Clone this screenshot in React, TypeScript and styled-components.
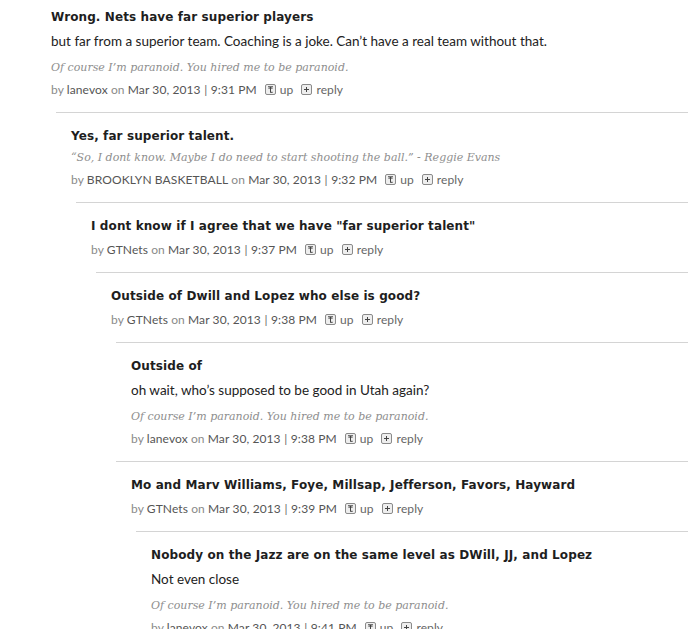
import styled, { createGlobalStyle } from 'styled-components';

type CommentData = {
  id: number;
  title: string;
  body?: string;
  sig?: string;
  author: string;
  time: string;
  replies?: CommentData[];
};

const PARANOID = 'Of course I\u2019m paranoid. You hired me to be paranoid.';

const thread: CommentData = {
  id: 1,
  title: 'Wrong. Nets have far superior players',
  body: 'but far from a superior team. Coaching is a joke. Can\u2019t have a real team without that.',
  sig: PARANOID,
  author: 'lanevox',
  time: '9:31 PM',
  replies: [
    {
      id: 2,
      title: 'Yes, far superior talent.',
      sig: '\u201cSo, I dont know. Maybe I do need to start shooting the ball.\u201d - Reggie Evans',
      author: 'BROOKLYN BASKETBALL',
      time: '9:32 PM',
      replies: [
        {
          id: 3,
          title: 'I dont know if I agree that we have "far superior talent"',
          author: 'GTNets',
          time: '9:37 PM',
          replies: [
            {
              id: 4,
              title: 'Outside of Dwill and Lopez who else is good?',
              author: 'GTNets',
              time: '9:38 PM',
              replies: [
                {
                  id: 5,
                  title: 'Outside of',
                  body: 'oh wait, who\u2019s supposed to be good in Utah again?',
                  sig: PARANOID,
                  author: 'lanevox',
                  time: '9:38 PM',
                },
                {
                  id: 6,
                  title: 'Mo and Marv Williams, Foye, Millsap, Jefferson, Favors, Hayward',
                  author: 'GTNets',
                  time: '9:39 PM',
                  replies: [
                    {
                      id: 7,
                      title: 'Nobody on the Jazz are on the same level as DWill, JJ, and Lopez',
                      body: 'Not even close',
                      sig: PARANOID,
                      author: 'lanevox',
                      time: '9:41 PM',
                    },
                  ],
                },
              ],
            },
          ],
        },
      ],
    },
  ],
};

const GlobalStyle = createGlobalStyle`
  html, body {
    margin: 0;
    padding: 0;
    background: #fff;
    overflow-x: hidden;
  }
  body {
    font-family: Lato, "Liberation Sans", Arial, sans-serif;
  }
`;

const Page = styled.div`
  padding-left: 36px;
`;

const Item = styled.div<{ $nested: boolean }>`
  border-top: ${(p) => (p.$nested ? '1px solid #d4d4d4' : 'none')};
`;

const Content = styled.div<{ $nested: boolean }>`
  padding: ${(p) => (p.$nested ? '12px' : '6px')} 0 11px 15px;
`;

const Title = styled.h3`
  margin: 0;
  font-family: "DejaVu Sans", Verdana, sans-serif;
  font-weight: bold;
  font-size: 12px;
  letter-spacing: 0.1px;
  line-height: 23px;
  color: #1e1e1e;
`;

const Body = styled.p`
  margin: 1px 0 5px;
  font-size: 13.5px;
  line-height: 23px;
  color: #222;
`;

const Sig = styled.div`
  font-family: "DejaVu Serif", "Liberation Serif", serif;
  font-style: italic;
  font-size: 11px;
  line-height: 20px;
  color: #8e8e8e;
`;

const Meta = styled.div`
  display: flex;
  align-items: center;
  font-size: 12px;
  letter-spacing: 0.1px;
  line-height: 23px;
  color: #8a8a8a;
  white-space: nowrap;
`;

const Strong = styled.span`
  color: #555;
`;

const Pipe = styled.span`
  margin: 0 3.5px;
  color: #666;
`;

const Action = styled.a`
  display: inline-flex;
  align-items: center;
  gap: 4px;
  margin-left: 8px;
  color: #666;
  text-decoration: none;
  cursor: pointer;
`;

const Replies = styled.div`
  margin-left: 20px;
`;

function UpIcon() {
  return (
    <svg width="11" height="11" viewBox="0 0 11 11">
      <rect x="0.5" y="0.5" width="10" height="10" rx="1.5" fill="#eee" stroke="#8a8a8a" />
      <path d="M3 2.8h5M5.5 3v5.6M3.6 5l1.9-1.9L7.4 5" fill="none" stroke="#444" strokeWidth="1" />
      <path d="M5.5 8.3h2.2" fill="none" stroke="#444" strokeWidth="1" />
    </svg>
  );
}

function ReplyIcon() {
  return (
    <svg width="11" height="11" viewBox="0 0 11 11">
      <rect x="0.5" y="0.5" width="10" height="10" rx="1.5" fill="#eee" stroke="#8a8a8a" />
      <path d="M3 5.5h5M5.5 3v5" fill="none" stroke="#444" strokeWidth="1" />
    </svg>
  );
}

function Comment({ data, nested }: { data: CommentData; nested: boolean }) {
  return (
    <Item $nested={nested}>
      <Content $nested={nested}>
        <Title>{data.title}</Title>
        {data.body && <Body>{data.body}</Body>}
        {data.sig && <Sig>{data.sig}</Sig>}
        <Meta>
          by&nbsp;<Strong>{data.author}</Strong>&nbsp;on&nbsp;
          <Strong>Mar 30, 2013</Strong>
          <Pipe>|</Pipe>
          <Strong>{data.time}</Strong>
          <Action>
            <UpIcon />
            up
          </Action>
          <Action>
            <ReplyIcon />
            reply
          </Action>
        </Meta>
      </Content>
      {data.replies && (
        <Replies>
          {data.replies.map((r) => (
            <Comment key={r.id} data={r} nested />
          ))}
        </Replies>
      )}
    </Item>
  );
}

export default function App() {
  return (
    <Page>
      <GlobalStyle />
      <Comment data={thread} nested={false} />
    </Page>
  );
}
